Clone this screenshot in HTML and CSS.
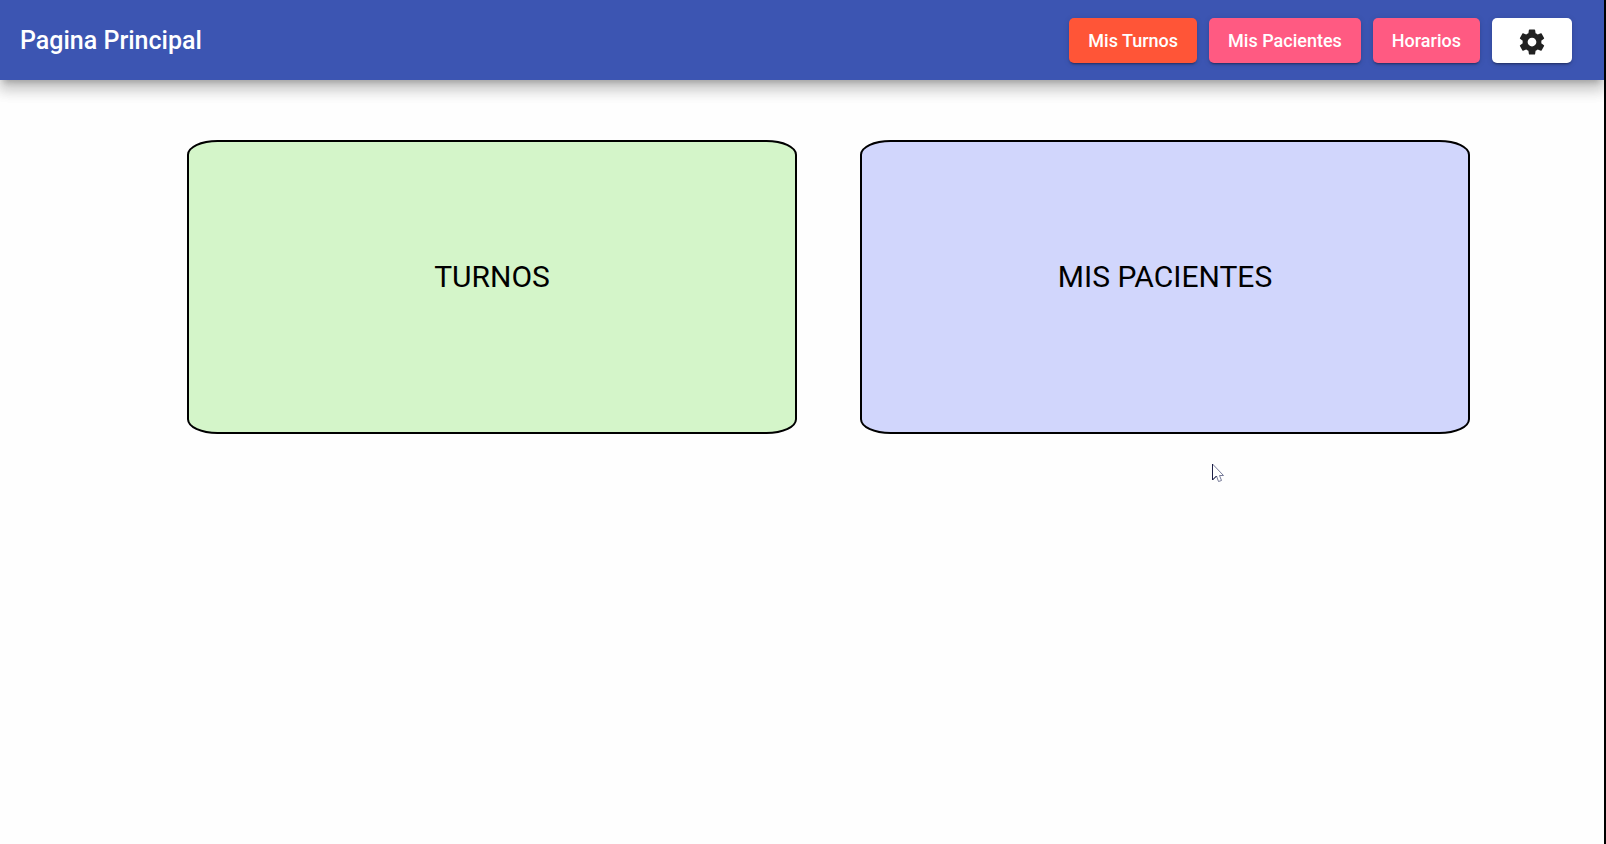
FILE: index.html
```html
<!DOCTYPE html>
<html lang="es">
<head>
<meta charset="utf-8">
<title>Pagina Principal</title>
<link rel="stylesheet" href="styles.css">
</head>
<body>
<header class="toolbar">
  <h1 class="toolbar-title">Pagina Principal</h1>
  <nav class="toolbar-actions">
    <button type="button" class="btn btn-active">Mis Turnos</button>
    <button type="button" class="btn">Mis Pacientes</button>
    <button type="button" class="btn">Horarios</button>
    <button type="button" class="btn btn-settings" aria-label="Ajustes">
      <svg class="icon" viewBox="0 0 24 24" aria-hidden="true"><path d="M19.43 12.98c.04-.32.07-.64.07-.98s-.03-.66-.07-.98l2.11-1.65c.19-.15.24-.42.12-.64l-2-3.46c-.12-.22-.39-.3-.61-.22l-2.49 1c-.52-.4-1.08-.73-1.69-.98l-.38-2.65C14.46 2.18 14.25 2 14 2h-4c-.25 0-.46.18-.49.42l-.38 2.65c-.61.25-1.17.59-1.69.98l-2.49-1c-.23-.09-.49 0-.61.22l-2 3.46c-.13.22-.07.49.12.64l2.11 1.65c-.04.32-.07.65-.07.98s.03.66.07.98l-2.11 1.65c-.19.15-.24.42-.12.64l2 3.46c.12.22.39.3.61.22l2.49-1c.52.4 1.08.73 1.69.98l.38 2.65c.03.24.24.42.49.42h4c.25 0 .46-.18.49-.42l.38-2.65c.61-.25 1.17-.59 1.69-.98l2.49 1c.23.09.49 0 .61-.22l2-3.46c.12-.22.07-.49-.12-.64l-2.11-1.65zM12 15.5c-1.93 0-3.5-1.57-3.5-3.5s1.57-3.5 3.500-3.500 3.500 1.570 3.500 3.500-1.570 3.500-3.500 3.500z"/></svg>
    </button>
  </nav>
</header>
<main class="cards">
  <button type="button" class="card card-green">TURNOS</button>
  <button type="button" class="card card-blue">MIS PACIENTES</button>
</main>
<svg class="cursor" viewBox="0 0 12 20" aria-hidden="true"><path d="M.5 1v16l4-4 2 5.500 3-1-2-5H11.500z" fill="#fff" stroke="#777b98"/><path d="M.5 1v16l4-4" fill="none" stroke="#1c1f45"/></svg>
</body>
</html>
```
FILE: styles.css
```css
* {
  box-sizing: border-box;
}

body {
  margin: 0;
  min-height: 100vh;
  border-right: 2px solid #000;
  background: #fefefe;
  font-family: Roboto, "Liberation Sans", sans-serif;
  overflow-x: hidden;
}

.toolbar {
  display: flex;
  align-items: center;
  justify-content: space-between;
  height: 80px;
  padding: 0 32px 0 20px;
  background: #3c55b2;
  box-shadow: 0 6px 6px -4px rgba(0, 0, 0, 0.2), 0 10px 12px 1px rgba(0, 0, 0, 0.14), 0 4px 18px 2px rgba(0, 0, 0, 0.12);
}

.toolbar-title {
  margin: 0;
  padding-top: 2px;
  color: #fff;
  font-size: 25px;
  font-weight: 500;
  line-height: 40px;
}

.toolbar-actions {
  display: flex;
  gap: 12px;
}

.btn {
  height: 45px;
  padding: 0 19px;
  border: 0;
  border-radius: 5px;
  background: #ff5a82;
  color: #fff;
  font-family: inherit;
  font-size: 18px;
  font-weight: 500;
  line-height: 45px;
  box-shadow: 0 3px 1px -2px rgba(0, 0, 0, 0.2), 0 2px 2px 0 rgba(0, 0, 0, 0.14), 0 1px 6px 0 rgba(0, 0, 0, 0.12);
}

.btn-active {
  background: #ff5537;
}

.btn-settings {
  display: flex;
  align-items: center;
  justify-content: center;
  width: 80px;
  padding: 3px 0 0;
  background: #fff;
  color: #212121;
}

.icon {
  width: 30px;
  height: 30px;
  fill: currentColor;
}

.cards {
  display: grid;
  grid-template-columns: 1fr 1fr;
  gap: 63px;
  padding: 60px 134px 60px 187px;
}

.card {
  height: 294px;
  padding: 0 0 22px;
  border: 2px solid #000;
  border-radius: 5%;
  color: #000;
  font-family: inherit;
  font-size: 30px;
}

.card-green {
  background: #d4f5c9;
}

.card-blue {
  background: #d1d6fc;
}

.cursor {
  position: absolute;
  top: 463px;
  left: 1212px;
  width: 12px;
  height: 20px;
}
```
